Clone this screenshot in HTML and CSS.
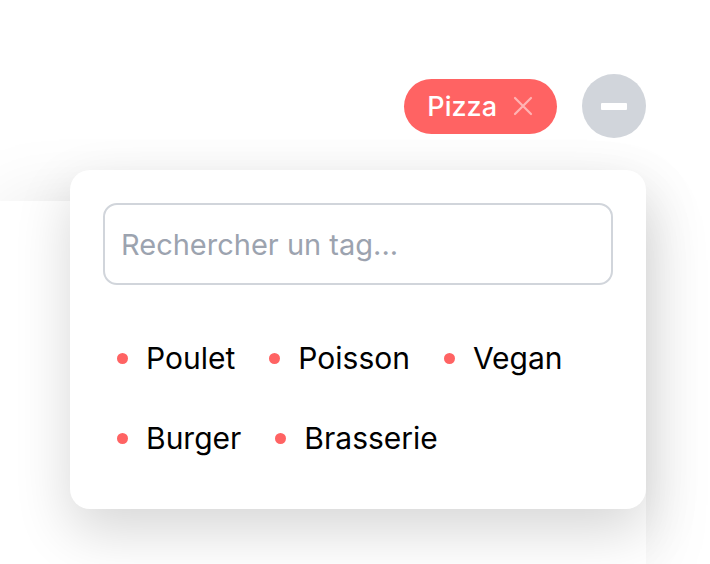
FILE: index.html
```html
<!DOCTYPE html>
<html lang="fr">
<head>
<meta charset="utf-8">
<title>Tags</title>
<link rel="stylesheet" href="styles.css">
</head>
<body>
<div class="stage">
  <div class="toolbar">
    <span class="chip">Pizza
      <svg class="chip-x" viewBox="0 0 20 20" width="20" height="20"><path d="M2 2L18 18M18 2L2 18" stroke="currentColor" stroke-width="2.2" stroke-linecap="round" fill="none"/></svg>
    </span>
    <button class="minus" type="button" aria-label="Retirer"><span class="bar"></span></button>
  </div>
  <div class="panel"></div>
  <div class="popover">
    <input class="search" type="text" placeholder="Rechercher un tag...">
    <ul class="tags">
      <li class="tag"><span class="dot"></span>Poulet</li>
      <li class="tag"><span class="dot"></span>Poisson</li>
      <li class="tag"><span class="dot"></span>Vegan</li>
      <li class="tag"><span class="dot"></span>Burger</li>
      <li class="tag"><span class="dot"></span>Brasserie</li>
    </ul>
  </div>
</div>
</body>
</html>
```

FILE: styles.css
```css
* { box-sizing: border-box; }
html, body {
  margin: 0;
  padding: 0;
  background: #ffffff;
  font-family: "Inter", "Noto Sans", sans-serif;
  overflow: hidden;
}
.stage {
  position: relative;
  width: 710px;
  height: 564px;
  overflow: hidden;
}
.toolbar {
  width: 646px;
  padding-top: 74px;
  display: flex;
  justify-content: flex-end;
  align-items: center;
  gap: 25px;
}
.chip {
  height: 55px;
  display: inline-flex;
  align-items: center;
  gap: 16px;
  padding: 0 24px 0 23px;
  background: #ff6363;
  color: #ffffff;
  border-radius: 28px;
  font-size: 27px;
  font-weight: 500;
}
.chip-x {
  color: #ffb3b3;
  width: 20px;
  height: 20px;
}
.minus {
  width: 64px;
  height: 64px;
  border: 0;
  border-radius: 50%;
  background: #d1d5db;
  display: flex;
  align-items: center;
  justify-content: center;
  padding: 0;
}
.bar {
  width: 26px;
  height: 7px;
  background: #ffffff;
  border-radius: 1px;
}
.panel {
  margin-top: 63px;
  width: 646px;
  height: 363px;
  background: #ffffff;
  box-shadow: 0 0 70px rgba(0, 0, 0, 0.09);
}
.popover {
  position: absolute;
  left: 70px;
  top: 170px;
  width: 576px;
  background: #ffffff;
  border-radius: 20px;
  padding: 33px 33px 51px 33px;
  box-shadow: 0 22px 55px rgba(0, 0, 0, 0.16);
}
.search {
  display: block;
  width: 510px;
  height: 82px;
  border: 2px solid #d1d5db;
  border-radius: 14px;
  padding: 0 16px;
  font-family: inherit;
  font-size: 29px;
  color: #111827;
  outline: none;
}
.search::placeholder { color: #9ca3af; }
.tags {
  list-style: none;
  margin: 53px 0 0 0;
  padding: 0 0 0 14px;
  display: flex;
  flex-wrap: wrap;
  column-gap: 34px;
  row-gap: 40px;
}
.tag {
  display: flex;
  align-items: center;
  gap: 18px;
  height: 40px;
  font-size: 30px;
  color: #000000;
}
.dot {
  width: 11px;
  height: 11px;
  border-radius: 50%;
  background: #ff6363;
}
```
